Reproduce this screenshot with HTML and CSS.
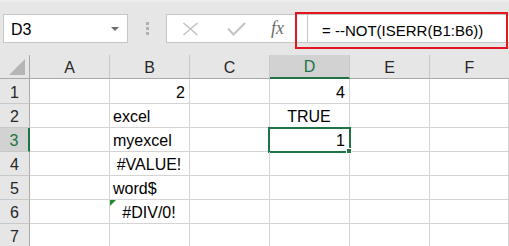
FILE: index.html
```html
<!DOCTYPE html>
<html lang="en">

<head>
    <meta charset="UTF-8">
    <meta name="viewport" content="width=device-width, initial-scale=1.0">
    <title>Sheet - ISERR</title>
    <link rel="stylesheet" href="styles.css">
</head>

<body>
    <div class="toolbar">
        <div class="namebox">
            <span>D3</span>
            <svg class="drop" width="8" height="4" viewBox="0 0 8 4"><polygon points="0,0 8,0 4,4" fill="#6d6d6d"/></svg>
        </div>
        <div class="grip"><span></span><span></span><span></span></div>
        <div class="formula">
            <div class="fbtn">
                <svg width="17" height="14" viewBox="0 0 17 14"><path d="M1.5 1 L15.5 13 M15.5 1 L1.5 13" stroke="#c3c3c3" stroke-width="1.6" fill="none"/></svg>
            </div>
            <div class="fbtn">
                <svg width="19" height="14" viewBox="0 0 19 14"><path d="M1 6.5 L6.5 12.5 L18 1" stroke="#c3c3c3" stroke-width="2" fill="none"/></svg>
            </div>
            <div class="fx">fx</div>
            <div class="input">= --NOT(ISERR(B1:B6))</div>
        </div>
        <!-- annotation box around the formula -->
        <div class="mark"></div>
    </div>

    <div class="sheet">
        <div class="hd corner">
            <svg width="17" height="17" viewBox="0 0 17 17"><polygon points="16,0 16,16 0,16" fill="#b5b5b5"/></svg>
        </div>
        <div class="hd">A</div>
        <div class="hd">B</div>
        <div class="hd">C</div>
        <div class="hd active-col">D</div>
        <div class="hd">E</div>
        <div class="hd last">F</div>

        <div class="rh">1</div>
        <div class="cell"></div>
        <div class="cell right">2</div>
        <div class="cell"></div>
        <div class="cell right">4</div>
        <div class="cell"></div>
        <div class="cell"></div>

        <div class="rh">2</div>
        <div class="cell"></div>
        <div class="cell">excel</div>
        <div class="cell"></div>
        <div class="cell center">TRUE</div>
        <div class="cell"></div>
        <div class="cell"></div>

        <div class="rh active-row">3</div>
        <div class="cell"></div>
        <div class="cell">myexcel</div>
        <div class="cell"></div>
        <div class="cell right selected">1<span class="handle"></span></div>
        <div class="cell"></div>
        <div class="cell"></div>

        <div class="rh">4</div>
        <div class="cell"></div>
        <div class="cell center">#VALUE!</div>
        <div class="cell"></div>
        <div class="cell"></div>
        <div class="cell"></div>
        <div class="cell"></div>

        <div class="rh">5</div>
        <div class="cell"></div>
        <div class="cell">word$</div>
        <div class="cell"></div>
        <div class="cell"></div>
        <div class="cell"></div>
        <div class="cell"></div>

        <div class="rh">6</div>
        <div class="cell"></div>
        <div class="cell center flagged">#DIV/0!</div>
        <div class="cell"></div>
        <div class="cell"></div>
        <div class="cell"></div>
        <div class="cell"></div>

        <div class="rh">7</div>
        <div class="cell"></div>
        <div class="cell"></div>
        <div class="cell"></div>
        <div class="cell"></div>
        <div class="cell"></div>
        <div class="cell"></div>
    </div>
</body>

</html>
```

FILE: styles.css
```css
* {
    box-sizing: border-box;
}

body {
    margin: 0;
    font-family: "Liberation Sans", Arial, sans-serif;
    font-size: 15px;
    color: #000;
    background: #e6e6e6;
    overflow: hidden;
}

/* formula bar */
.toolbar {
    position: relative;
    display: flex;
    align-items: flex-start;
    height: 55px;
    padding: 12px 0 0 3px;
    border-top: 2px solid #ececec;
}

.namebox {
    display: flex;
    align-items: center;
    justify-content: space-between;
    width: 125px;
    height: 29px;
    padding: 3px 8px 0 7px;
    font-size: 16px;
    background: #fff;
    border: 1px solid #c6c6c6;
}

.namebox .drop {
    margin-top: -2px;
}

.grip {
    display: flex;
    flex-direction: column;
    align-items: center;
    gap: 2px;
    width: 38px;
    padding-top: 8px;
}

.grip span {
    width: 3px;
    height: 3px;
    background: #b1b1b1;
}

.formula {
    flex: 1;
    display: flex;
    align-items: center;
    height: 29px;
    background: #fff;
    border: 1px solid #c6c6c6;
    border-right: none;
}

.fbtn {
    display: flex;
    justify-content: center;
    width: 46px;
}

.fx {
    width: 48px;
    padding-left: 12px;
    font-family: "Liberation Serif", serif;
    font-style: italic;
    font-size: 18px;
    color: #6b6b6b;
}

.input {
    flex: 1;
    align-self: stretch;
    display: flex;
    align-items: center;
    padding: 3px 0 0 14px;
    border-left: 1px solid #c6c6c6;
}

.mark {
    position: absolute;
    left: 295px;
    top: 10px;
    width: 213px;
    height: 37px;
    border: 2px solid #e3151e;
}

/* grid */
.sheet {
    display: grid;
    grid-template-columns: 30px repeat(5, 80px) 1fr;
    grid-template-rows: 24px 25px repeat(6, 24px);
    font-size: 16px;
    background: #fff;
}

.hd,
.rh,
.cell {
    display: flex;
    align-items: flex-end;
    line-height: 18px;
    padding-bottom: 1px;
}

.hd {
    justify-content: center;
    background: #e6e6e6;
    color: #262626;
    border-right: 1px solid #c8c8c8;
    border-bottom: 1px solid #a9a9a9;
}

.hd.corner {
    justify-content: flex-end;
    padding: 0 3px 2px 0;
    border-right: 1px solid #a9a9a9;
}

.hd.active-col {
    background: #d2d2d2;
    color: #217346;
    border-bottom: 2px solid #217346;
}

.hd.last {
    border-right: none;
}

.rh {
    justify-content: center;
    background: #e6e6e6;
    color: #262626;
    border-right: 1px solid #a9a9a9;
    border-bottom: 1px solid #c8c8c8;
}

.rh.active-row {
    background: #d2d2d2;
    color: #217346;
    border-right: 2px solid #217346;
}

.cell {
    position: relative;
    padding-left: 3px;
    padding-right: 4px;
    border-right: 1px solid #d4d4d4;
    border-bottom: 1px solid #d4d4d4;
}

.cell.right {
    justify-content: flex-end;
}

.cell.center {
    justify-content: center;
}

.cell.selected::after {
    content: "";
    position: absolute;
    left: -2px;
    top: -1px;
    right: -2px;
    bottom: -2px;
    border: 2px solid #217346;
}

.handle {
    position: absolute;
    right: -3px;
    bottom: -3px;
    width: 6px;
    height: 6px;
    background: #217346;
    border: 1px solid #fff;
    z-index: 1;
}

.cell.flagged::before {
    content: "";
    position: absolute;
    left: 0;
    top: 0;
    border-top: 6px solid #1f8a2f;
    border-right: 6px solid transparent;
}
```
